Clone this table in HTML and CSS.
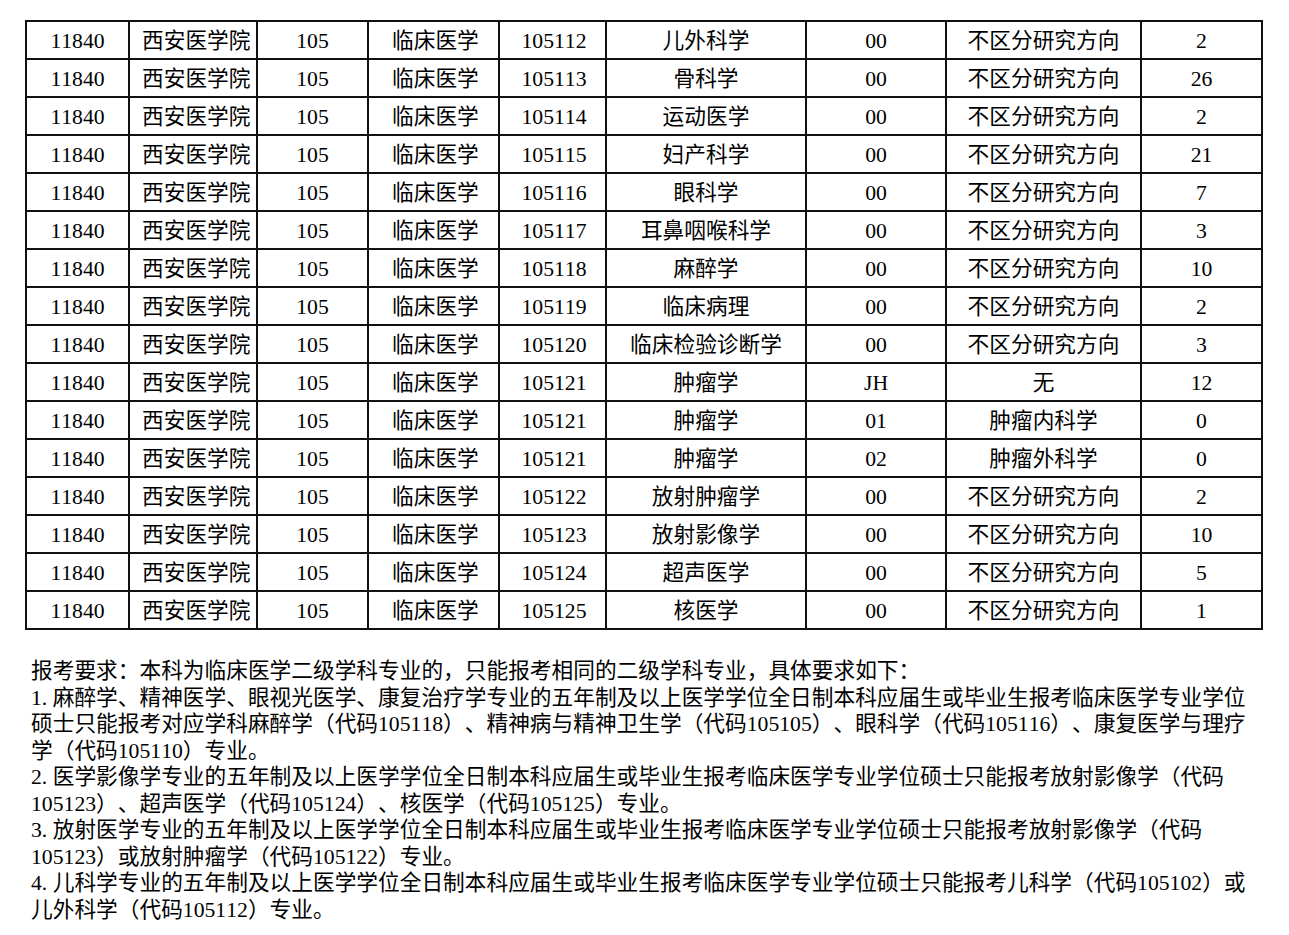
FILE: index.html
```html
<!DOCTYPE html>
<html lang="zh-CN">
<head>
<meta charset="utf-8">
<title>西安医学院 临床医学</title>
<link rel="stylesheet" href="styles.css">
</head>
<body>
<div class="page">
<table class="grid">
<colgroup>
<col class="c1"><col class="c2"><col class="c3"><col class="c4"><col class="c5"><col class="c6"><col class="c7"><col class="c8"><col class="c9">
</colgroup>
<tbody>
<tr><td>11840</td><td class="left">西安医学院</td><td>105</td><td class="left">临床医学</td><td>105112</td><td>儿外科学</td><td>00</td><td>不区分研究方向</td><td>2</td></tr>
<tr><td>11840</td><td class="left">西安医学院</td><td>105</td><td class="left">临床医学</td><td>105113</td><td>骨科学</td><td>00</td><td>不区分研究方向</td><td>26</td></tr>
<tr><td>11840</td><td class="left">西安医学院</td><td>105</td><td class="left">临床医学</td><td>105114</td><td>运动医学</td><td>00</td><td>不区分研究方向</td><td>2</td></tr>
<tr><td>11840</td><td class="left">西安医学院</td><td>105</td><td class="left">临床医学</td><td>105115</td><td>妇产科学</td><td>00</td><td>不区分研究方向</td><td>21</td></tr>
<tr><td>11840</td><td class="left">西安医学院</td><td>105</td><td class="left">临床医学</td><td>105116</td><td>眼科学</td><td>00</td><td>不区分研究方向</td><td>7</td></tr>
<tr><td>11840</td><td class="left">西安医学院</td><td>105</td><td class="left">临床医学</td><td>105117</td><td>耳鼻咽喉科学</td><td>00</td><td>不区分研究方向</td><td>3</td></tr>
<tr><td>11840</td><td class="left">西安医学院</td><td>105</td><td class="left">临床医学</td><td>105118</td><td>麻醉学</td><td>00</td><td>不区分研究方向</td><td>10</td></tr>
<tr><td>11840</td><td class="left">西安医学院</td><td>105</td><td class="left">临床医学</td><td>105119</td><td>临床病理</td><td>00</td><td>不区分研究方向</td><td>2</td></tr>
<tr><td>11840</td><td class="left">西安医学院</td><td>105</td><td class="left">临床医学</td><td>105120</td><td>临床检验诊断学</td><td>00</td><td>不区分研究方向</td><td>3</td></tr>
<tr><td>11840</td><td class="left">西安医学院</td><td>105</td><td class="left">临床医学</td><td>105121</td><td>肿瘤学</td><td>JH</td><td>无</td><td>12</td></tr>
<tr><td>11840</td><td class="left">西安医学院</td><td>105</td><td class="left">临床医学</td><td>105121</td><td>肿瘤学</td><td>01</td><td>肿瘤内科学</td><td>0</td></tr>
<tr><td>11840</td><td class="left">西安医学院</td><td>105</td><td class="left">临床医学</td><td>105121</td><td>肿瘤学</td><td>02</td><td>肿瘤外科学</td><td>0</td></tr>
<tr><td>11840</td><td class="left">西安医学院</td><td>105</td><td class="left">临床医学</td><td>105122</td><td>放射肿瘤学</td><td>00</td><td>不区分研究方向</td><td>2</td></tr>
<tr><td>11840</td><td class="left">西安医学院</td><td>105</td><td class="left">临床医学</td><td>105123</td><td>放射影像学</td><td>00</td><td>不区分研究方向</td><td>10</td></tr>
<tr><td>11840</td><td class="left">西安医学院</td><td>105</td><td class="left">临床医学</td><td>105124</td><td>超声医学</td><td>00</td><td>不区分研究方向</td><td>5</td></tr>
<tr><td>11840</td><td class="left">西安医学院</td><td>105</td><td class="left">临床医学</td><td>105125</td><td>核医学</td><td>00</td><td>不区分研究方向</td><td>1</td></tr>
</tbody>
</table>
<div class="notes">
<p class="line">报考要求：本科为临床医学二级学科专业的，只能报考相同的二级学科专业，具体要求如下：</p>
<p class="line"><span class="idx">1.</span>麻醉学、精神医学、眼视光医学、康复治疗学专业的五年制及以上医学学位全日制本科应届生或毕业生报考临床医学专业学位</p>
<p class="line">硕士只能报考对应学科麻醉学（代码105118）、精神病与精神卫生学（代码105105）、眼科学（代码105116）、康复医学与理疗</p>
<p class="line">学（代码105110）专业。</p>
<p class="line"><span class="idx">2.</span>医学影像学专业的五年制及以上医学学位全日制本科应届生或毕业生报考临床医学专业学位硕士只能报考放射影像学（代码</p>
<p class="line">105123）、超声医学（代码105124）、核医学（代码105125）专业。</p>
<p class="line"><span class="idx">3.</span>放射医学专业的五年制及以上医学学位全日制本科应届生或毕业生报考临床医学专业学位硕士只能报考放射影像学（代码</p>
<p class="line">105123）或放射肿瘤学（代码105122）专业。</p>
<p class="line"><span class="idx">4.</span>儿科学专业的五年制及以上医学学位全日制本科应届生或毕业生报考临床医学专业学位硕士只能报考儿科学（代码105102）或</p>
<p class="line">儿外科学（代码105112）专业。</p>
</div>
</div>
</body>
</html>
```

FILE: styles.css
```css
html, body {
  margin: 0;
  padding: 0;
  background: #ffffff;
}

body {
  font-family: "Liberation Serif", "Noto Sans CJK SC", serif;
  color: #000000;
  text-spacing-trim: space-all;
  font-kerning: none;
}

.page {
  padding: 20px 0 0 25px;
}

.grid {
  border-collapse: collapse;
  table-layout: fixed;
  width: 1238px;
  font-size: 21.7px;
}

.c1 { width: 103px; }
.c2 { width: 128px; }
.c3 { width: 111px; }
.c4 { width: 131px; }
.c5 { width: 107px; }
.c6 { width: 200px; }
.c7 { width: 140px; }
.c8 { width: 195px; }
.c9 { width: 121px; }

.grid td {
  border: 2px solid #111111;
  height: 33px;
  padding: 3px 0 0 0;
  text-align: center;
  vertical-align: middle;
  line-height: 33px;
  white-space: nowrap;
  overflow: hidden;
}

.grid td.left {
  text-align: left;
  padding-left: 12px;
}

.grid td:nth-child(4) {
  padding-left: 23px;
}

.grid td:nth-child(5) {
  padding-left: 3px;
}

.notes {
  margin-top: 28px;
  padding-left: 6px;
  font-size: 21.7px;
  line-height: 26.5px;
}

.line {
  margin: 0;
  white-space: nowrap;
}

.idx {
  display: inline-block;
  width: 1em;
}
```
